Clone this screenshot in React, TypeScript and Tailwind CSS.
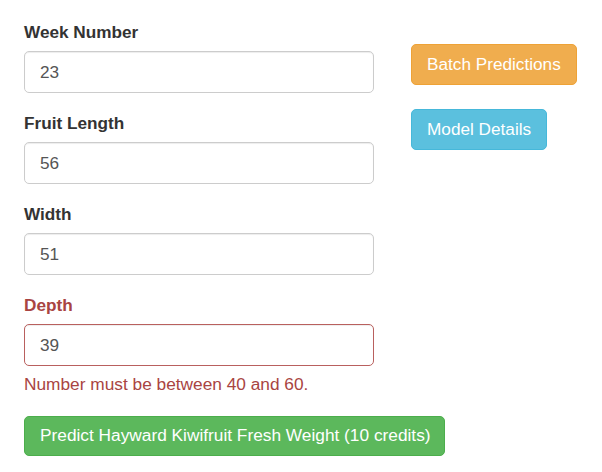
import React from "react";

function Field({ label, value, error }: { label: string; value: string; error?: string }) {
  return (
    <div className="mb-[18px]">
      <label
        className={`block font-bold text-[17.2px] leading-[24px] mb-[7px] ${error ? "text-[#a94442]" : "text-[#333333]"}`}
      >
        {label}
      </label>
      <input
        readOnly
        value={value}
        className={`block w-[350px] h-[42px] px-[15px] text-[17.2px] text-[#555555] bg-white rounded-[5px] border outline-none shadow-[inset_0_1px_1px_rgba(0,0,0,0.075)] ${
          error ? "border-[#b9605e]" : "border-[#cccccc]"
        }`}
      />
      {error && (
        <div className="mt-[6px] text-[17.3px] leading-[24px] text-[#a94442]">{error}</div>
      )}
    </div>
  );
}

export default function App() {
  return (
    <div
      className="w-[602px] h-[472px] bg-white pt-[20px] pl-[24px] flex"
      style={{ fontFamily: '"Liberation Sans", Arial, sans-serif' }}
    >
      <div className="w-[350px] flex flex-col">
        <Field label="Week Number" value="23" />
        <Field label="Fruit Length" value="56" />
        <Field label="Width" value="51" />
        <Field label="Depth" value="39" error="Number must be between 40 and 60." />
        <button className="mt-[2px] w-[421px] h-[40px] px-[15px] text-left text-[17.3px] text-white bg-[#5cb85c] border border-[#4cae4c] rounded-[5px] whitespace-nowrap">
          Predict Hayward Kiwifruit Fresh Weight (10 credits)
        </button>
      </div>
      <div className="ml-[37px] pt-[24px] flex flex-col items-start gap-[24px]">
        <button className="h-[41px] w-[166px] px-[15px] text-left text-[17.2px] text-white bg-[#f0ad4e] border border-[#eea236] rounded-[5px] whitespace-nowrap">
          Batch Predictions
        </button>
        <button className="h-[41px] w-[136px] px-[15px] text-left text-[17.2px] text-white bg-[#5bc0de] border border-[#46b8da] rounded-[5px] whitespace-nowrap">
          Model Details
        </button>
      </div>
    </div>
  );
}
